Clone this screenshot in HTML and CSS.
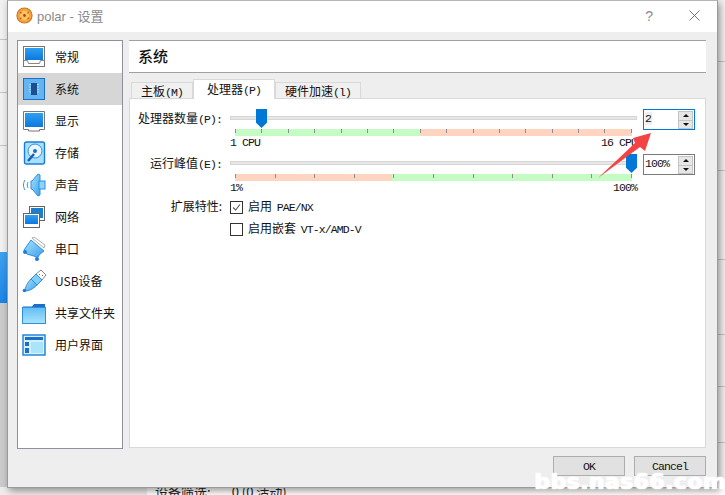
FILE: index.html
```html
<!DOCTYPE html>
<html lang="zh">
<head>
<meta charset="utf-8">
<title>polar - 设置</title>
<link rel="stylesheet" href="styles.css">
</head>
<body>
<svg class="defs" aria-hidden="true">
  <defs>
    <linearGradient id="blue" x1="0" y1="0" x2="0" y2="1"><stop offset="0" stop-color="#2f9ff0"/><stop offset="1" stop-color="#0a78e0"/></linearGradient>
    <linearGradient id="sky" x1="0" y1="0" x2="0" y2="1"><stop offset="0" stop-color="#62bdf6"/><stop offset="1" stop-color="#a9e4fb"/></linearGradient>
    <linearGradient id="skyd" x1="0" y1="0" x2="1" y2="1"><stop offset="0" stop-color="#a6e3fc"/><stop offset="1" stop-color="#3f9fec"/></linearGradient>
  </defs>
</svg>
<div class="desktop">
  <div class="back-blue"></div>
  <div class="back-page"><span class="back-text"><span>设备筛选:</span><span>0 (0 活动)</span></span></div>

  <div class="window">
    <div class="titlebar">
      <svg class="app-icon" viewBox="0 0 18 18"><circle cx="9" cy="9" r="8" fill="#f3a53a" stroke="#c9732a" stroke-width="1.2"/><circle cx="9" cy="9" r="5" fill="#f7c65a"/><circle cx="9" cy="9" r="1.5" fill="#c0392b"/><circle cx="5" cy="6" r="1" fill="#d9562e"/><circle cx="13" cy="6" r="1" fill="#d9562e"/><circle cx="5" cy="12" r="1" fill="#d9562e"/><circle cx="13" cy="12" r="1" fill="#d9562e"/></svg>
      <span class="title-text">polar - 设置</span>
      <span class="help">?</span>
      <svg class="close" viewBox="0 0 11 11"><path d="M.5.5l10 10M10.500.5l-10 10" stroke="#777" stroke-width="1" fill="none"/></svg>
    </div>
    <div class="body">
      <div class="main">
        <ul class="nav">
          <li class="nav-item">
            <svg class="nav-icon" viewBox="0 0 24 24"><rect x="1.500" y="1.500" width="21" height="20" fill="#fff" stroke="#777"/><rect x="3" y="3" width="18" height="12" fill="url(#blue)"/><path d="M1.500 15.500h4l1 3h11l1-3h4" fill="none" stroke="#888"/></svg>
            <span>常规</span>
          </li>
          <li class="nav-item selected">
            <svg class="nav-icon" viewBox="0 0 24 24"><rect x="1.500" y="1.500" width="21" height="21" fill="#62b4f2" stroke="#1b6fc8"/><rect x="9" y="6" width="6" height="12" fill="#1c4f90"/><path d="M7 7.500h2M7 10h2M7 12.500h2M7 15h2M15 7.500h2M15 10h2M15 12.500h2M15 15h2" stroke="#cfe8fb" stroke-width=".8"/></svg>
            <span>系统</span>
          </li>
          <li class="nav-item">
            <svg class="nav-icon" viewBox="0 0 24 24"><path d="M1.500 2.500h21v18h-5v1.500h-11v-1.500h-5z" fill="#fff" stroke="#777"/><rect x="3" y="4" width="18" height="14" fill="url(#blue)"/></svg>
            <span>显示</span>
          </li>
          <li class="nav-item">
            <svg class="nav-icon" viewBox="0 0 24 24"><rect x="2.500" y="1" width="20" height="22" rx="2" fill="#a8e0fa" stroke="#1b7cd8" stroke-width="1.400"/><circle cx="13" cy="10" r="7" fill="#e8f7fe" stroke="#2f8fe0"/><circle cx="13" cy="10" r="2" fill="#1b6fc8"/><path d="M6 20l6-7" stroke="#1b5fb0" stroke-width="2.500"/></svg>
            <span>存储</span>
          </li>
          <li class="nav-item">
            <svg class="nav-icon" viewBox="0 0 24 24"><path d="M10 8l-1 0 0 8 1 0 6 7 2-1V2l-2-1z" fill="url(#skyd)" stroke="#2e8fe0"/><rect x="17" y="8" width="6" height="8" fill="#8cd4f8" stroke="#2e8fe0"/><path d="M3 7c-2 3-2 7 0 10M6 9c-1 2-1 4 0 6" fill="none" stroke="#2e8fe0"/></svg>
            <span>声音</span>
          </li>
          <li class="nav-item">
            <svg class="nav-icon" viewBox="0 0 24 24"><rect x="7.500" y="1.500" width="15" height="14" fill="#fff" stroke="#666"/><rect x="9" y="3" width="12" height="10" fill="#1b7fd0"/><rect x="1.500" y="8.500" width="16" height="14" fill="#fff" stroke="#666"/><rect x="3" y="10" width="13" height="9" fill="url(#blue)"/></svg>
            <span>网络</span>
          </li>
          <li class="nav-item">
            <svg class="nav-icon" viewBox="0 0 24 24"><path d="M9 3l13 11-4 3-2 3-1 0L5 17l-3-4z" fill="url(#skyd)" stroke="#2e8fe0"/><path d="M10 1l12 10 1-3L12 0z" fill="#fff" stroke="#999" stroke-width=".8"/><circle cx="3" cy="15" r="2" fill="#1b7fd8"/><circle cx="15" cy="22" r="2" fill="#1b7fd8"/></svg>
            <span>串口</span>
          </li>
          <li class="nav-item">
            <svg class="nav-icon" viewBox="0 0 24 24"><path d="M3 22c0-3 2-8 6-12l6 6c-4 4-8 6-12 6z" fill="url(#skyd)" stroke="#2e8fe0"/><path d="M14 5l5-4 5 5-4 5z" fill="#fff" stroke="#888"/><path d="M17 5l1 1M20 7l1-1" stroke="#777"/><path d="M9 10l5-5 6 6-5 5z" fill="#7fcdf8" stroke="#2e8fe0"/><circle cx="2.500" cy="21.500" r="1.800" fill="#1b7fd8"/></svg>
            <span>USB设备</span>
          </li>
          <li class="nav-item">
            <svg class="nav-icon" viewBox="0 0 24 24"><path d="M1 5.500h9l2-2.500h11v3H1z" fill="#1b6fc8"/><rect x=".5" y="6.500" width="23" height="16" fill="url(#sky)" stroke="#2e8fe0"/></svg>
            <span>共享文件夹</span>
          </li>
          <li class="nav-item">
            <svg class="nav-icon" viewBox="0 0 24 24"><rect x="1" y="2" width="22" height="20" fill="#d3f1fd" stroke="#1b7fd8" stroke-width="1.400"/><rect x="3" y="4" width="18" height="3" fill="#1b6fc8"/><rect x="3" y="9" width="4" height="4" fill="#1b6fc8"/><rect x="3" y="15" width="4" height="5" fill="#1b6fc8"/><rect x="9" y="9" width="12" height="11" fill="#a9e4fb"/></svg>
            <span>用户界面</span>
          </li>
        </ul>
        <div class="content">
          <div class="page-title">系统</div>
          <div class="tabs">
            <div class="tab">主板<span class="lat">(M)</span></div>
            <div class="tab active">处理器<span class="lat">(P)</span></div>
            <div class="tab">硬件加速<span class="lat">(l)</span></div>
          </div>
          <div class="pane">
            <div class="form">
              <label class="field-label">处理器数量<span class="lat">(P):</span></label>
              <div class="slider">
                <div class="track"></div>
                <div class="handle cpu"></div>
                <div class="scale scale-cpu">
                  <i></i><i></i><i></i><i></i><i></i><i></i><i></i><i></i><i></i><i></i><i></i><i></i><i></i><i></i><i></i><i></i>
                </div>
                <div class="ends lat"><span>1 CPU</span><span>16 CPU</span></div>
              </div>
              <div class="spin focus">
                <span class="spin-value"><span class="lat sel">2</span></span>
                <span class="spin-btns"><b class="up"></b><b class="down"></b></span>
              </div>

              <label class="field-label">运行峰值<span class="lat">(E):</span></label>
              <div class="slider short">
                <div class="track"></div>
                <div class="handle peak"></div>
                <div class="scale scale-peak">
                  <i></i><i></i><i></i><i></i><i></i><i></i><i></i><i></i><i></i><i></i><i></i>
                </div>
                <div class="ends lat"><span>1%</span><span>100%</span></div>
              </div>
              <div class="spin">
                <span class="spin-value"><span class="lat">100%</span></span>
                <span class="spin-btns"><b class="up"></b><b class="down"></b></span>
              </div>

              <label class="field-label tall">扩展特性:</label>
              <div class="check-row">
                <span class="check"><svg viewBox="0 0 13 13"><path d="M2.500 6.500l3 3 5-6.500" fill="none" stroke="#555" stroke-width="1.300"/></svg></span>
                <span class="check-text">启用 <span class="lat">PAE/NX</span></span>
              </div>
              <span></span>

              <span></span>
              <div class="check-row">
                <span class="check"></span>
                <span class="check-text">启用嵌套 <span class="lat">VT-x/AMD-V</span></span>
              </div>
              <span></span>
            </div>
          </div>
        </div>
      </div>
      <div class="buttons">
        <button class="btn">OK</button>
        <button class="btn">Cancel</button>
      </div>
    </div>
  </div>

  <svg class="arrow" viewBox="0 0 60 50"><polygon points="1,48 38,13 36,8 54,3 48,21 43,17" fill="#f24444"/></svg>
  <div class="watermark">bbs.nas66.com</div>
</div>
</body>
</html>
```
FILE: styles.css
```css
html, body { margin: 0; padding: 0; width: 725px; height: 495px; overflow: hidden; }
body { font-family: "Noto Sans CJK SC", "Liberation Sans", sans-serif; font-size: 12px; color: #111; }
.defs { position: absolute; width: 0; height: 0; }
.lat { font-family: "Liberation Mono", monospace; font-size: 11.500px; letter-spacing: -0.9px; }

.desktop {
  position: relative; width: 725px; height: 495px; overflow: hidden; background-color: #f0f0f0;
  background-image:
    linear-gradient(#c4c4c4, #c4c4c4), linear-gradient(#c4c4c4, #c4c4c4), linear-gradient(#c4c4c4, #c4c4c4),
    linear-gradient(#c4c4c4, #c4c4c4), linear-gradient(#c4c4c4, #c4c4c4), linear-gradient(#c4c4c4, #c4c4c4),
    linear-gradient(#c4c4c4, #c4c4c4), linear-gradient(#c4c4c4, #c4c4c4), linear-gradient(#c4c4c4, #c4c4c4);
  background-repeat: no-repeat;
  background-size: 10px 1px;
  background-position: 0 39px, 0 92px, 0 145px, 715px 61px, 715px 170px, 715px 259px, 715px 334px, 715px 386px, 715px 442px;
}
.back-blue { position: absolute; left: 0; top: 252px; width: 7px; height: 51px; background: linear-gradient(#3fa2ef, #1a84e6); }
.back-page { position: absolute; left: 0; top: 303px; width: 147px; height: 192px; background: linear-gradient(#cbcbcb 0 184px, #ececec 184px); }
.back-page::after { content: ""; position: absolute; left: 147px; top: 180px; width: 578px; height: 12px; background: #fff; }
.back-text { position: absolute; left: 155px; top: 181px; z-index: 1; display: flex; gap: 21px; white-space: nowrap; font-size: 13px; line-height: 16px; color: #222; }

.window {
  position: absolute; left: 7px; top: 0; width: 709px; height: 486px; z-index: 2;
  display: flex; flex-direction: column; background: #eee;
  border: 1px solid #9a9a9a; border-top-color: #b5b5b5;
  box-shadow: 2px 3px 7px rgba(0, 0, 0, .38);
}
.titlebar { height: 29px; padding-bottom: 2px; flex: none; display: flex; align-items: center; background: #fff; padding-left: 8px; }
.app-icon { width: 17px; height: 17px; flex: none; }
.title-text { margin-left: 4px; color: #8a8a8a; font-size: 13px; font-family: "Liberation Sans", "Noto Sans CJK SC", sans-serif; }
.help { margin-left: auto; color: #8c8c8c; font-size: 14px; font-family: "Liberation Sans", sans-serif; }
.close { width: 11px; height: 11px; margin: 0 17px 0 36px; }

.body { flex: 1; display: flex; flex-direction: column; padding: 8px 11px 10px 9px; min-height: 0; }
.main { display: flex; gap: 6px; flex: none; height: 409px; }

.nav { list-style: none; margin: 0; padding: 0; width: 104px; height: 407px; flex: none; background: #fff; border: 1px solid #8f8f9d; }
.nav-item { display: flex; align-items: center; height: 32px; padding-left: 4px; gap: 9px; white-space: nowrap; }
.nav-item span { margin-bottom: 2px; }
.nav-item.selected { background: #d6d6d6; }
.nav-icon { width: 24px; height: 24px; flex: none; }

.content { flex: 1; display: flex; flex-direction: column; min-width: 0; margin-bottom: 1px; }
.page-title { height: 29px; padding: 0 0 2px 9px; flex: none; display: flex; align-items: center; background: #fff; border-top: 1px solid #a0a0a0; border-bottom: 1px solid #a0a0a0; font-size: 15px; font-weight: 500; }

.tabs { display: flex; align-items: flex-end; height: 25px; flex: none; padding-left: 2px; }
.tab { height: 15px; padding: 0 9px; line-height: 15px; background: #f0f0f0; border: 1px solid #d9d9d9; border-bottom: 0; white-space: nowrap; }
.tab.active { height: 19px; line-height: 18px; background: #fff; position: relative; top: 1px; padding: 0 13px; z-index: 1; }

.pane { flex: 1; background: #fff; border: 1px solid #d9d9d9; padding: 10px 10px 0 0; min-height: 0; }
.form { display: grid; grid-template-columns: 92px 421px 52px; align-items: start; }
.field-label { line-height: 18px; justify-self: end; white-space: nowrap; }
.field-label.tall { line-height: 20px; }

.slider { position: relative; margin-left: 8px; width: 407px; height: 45px; }
.slider.short { height: 42px; }
.track { position: absolute; left: 0; right: 0; top: 7px; height: 2px; background: #e7e7e7; border: 1px solid #d6d6d6; }
.handle { position: absolute; width: 11px; height: 19px; top: 0; background: #0078d7; clip-path: polygon(0 0, 100% 0, 100% 72%, 50% 100%, 0 72%); }
.handle.cpu { left: 26px; }
.handle.peak { left: 396px; }
.scale { position: absolute; left: 5px; width: 397px; top: 20px; height: 7px; display: flex; justify-content: space-between; }
.scale i { width: 1px; height: 4px; background: #8d8d8d; }
.scale-cpu { background: linear-gradient(90deg, #c4fcc4 0 185px, #ffd5c2 185px); }
.scale-peak { background: linear-gradient(90deg, #ffd5c2 0 157px, #c4fcc4 157px); }
.ends { position: absolute; left: 0; right: 0; top: 28px; display: flex; justify-content: space-between; line-height: 12px; }

.spin { width: 50px; height: 19px; display: flex; align-items: center; justify-content: space-between; background: #fff; border: 1px solid #7a7a7a; }
.spin.focus { border-color: #0078d7; }
.spin-value { padding-left: 1px; line-height: 13px; display: flex; margin-bottom: 3px; }
.sel { background: #eee; display: inline-block; padding-right: 1px; }
.spin-btns { display: flex; flex-direction: column; margin-right: 1px; }
.spin-btns b { display: flex; align-items: center; justify-content: center; width: 13px; height: 7px; background: #e6e6e6; border: 1px solid #c4c4c4; }
.spin-btns .up { border-bottom: 0; height: 8px; }
.spin-btns .up::before { content: ""; border: 3px solid transparent; border-top: 0; border-bottom: 3px solid #111; }
.spin-btns .down::before { content: ""; border: 3px solid transparent; border-bottom: 0; border-top: 3px solid #111; }

.check-row { display: flex; align-items: center; gap: 5px; margin-left: 8px; height: 22px; white-space: nowrap; }
.check { width: 11px; height: 11px; border: 1px solid #333; background: #fff; display: flex; flex: none; }
.check svg { width: 11px; height: 11px; }
.check-text { margin-bottom: 4px; }
.check-text .lat { margin-left: 2px; }

.buttons { flex: 1; display: flex; justify-content: flex-end; align-items: flex-start; gap: 9px; padding-top: 7px; }
.btn { width: 72px; height: 20px; background: #e1e1e1; border: 1px solid #adadad; padding: 0; font-family: "Liberation Mono", monospace; font-size: 11.500px; letter-spacing: -0.9px; color: #111; }

.arrow { position: absolute; left: 597px; top: 130px; width: 60px; height: 50px; z-index: 3; }
.watermark { position: absolute; left: 534px; top: 469px; z-index: 4; font-family: "DejaVu Sans", sans-serif; font-weight: 700; font-size: 22px; letter-spacing: .4px; line-height: 26px; color: #fff; text-shadow: 1px 0 0 #fff, 0 0 2px rgba(255,255,255,.9); white-space: nowrap; }
```
